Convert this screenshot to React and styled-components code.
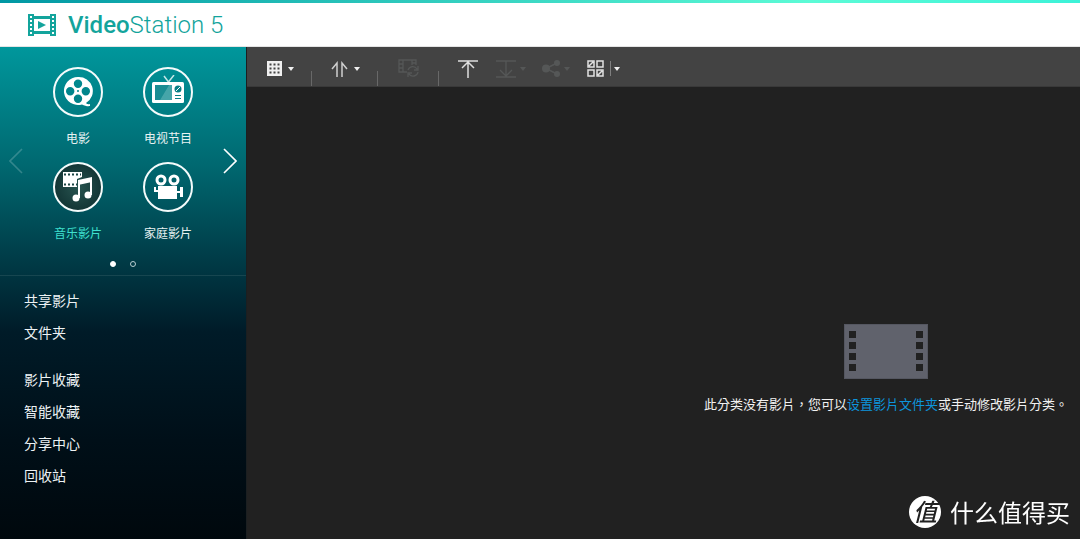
import styled, { createGlobalStyle } from 'styled-components';

const GlobalStyle = createGlobalStyle`
  * {
    box-sizing: border-box;
  }

  body {
    margin: 0;
    background: #212121;
    color: #ffffff;
    font-family: 'Noto Sans CJK SC', 'Noto Sans', sans-serif;
  }

  button {
    padding: 0;
    border: 0;
    background: none;
    color: inherit;
    font: inherit;
    cursor: pointer;
  }

  svg {
    display: block;
  }
`;

const Page = styled.div`
  display: flex;
  flex-direction: column;
  min-height: 100vh;
`;

const Header = styled.header`
  height: 47px;
  border-top: 3px solid;
  border-image: linear-gradient(90deg, #0097a3, #5cfbd6 75%, #3cf2d8) 1;
  border-width: 3px 0 0;
  background: #ffffff;
`;

const Brand = styled.h1`
  display: flex;
  align-items: center;
  gap: 12px;
  height: 44px;
  margin: 0;
  padding-left: 28px;
  border-bottom: 1px solid #e4e4e4;
  color: #13a49c;
  font: 300 24px/44px Roboto, sans-serif;

  strong {
    font-weight: 500;
  }
`;

const Body = styled.div`
  display: flex;
  flex: 1;
`;

const Sidebar = styled.aside`
  flex: none;
  width: 247px;
  border-right: 1px solid #1b1f21;
  background: linear-gradient(#00979c 0%, #006870 24%, #003541 46%, #001b28 58%, #000f18 80%, #00080d 100%);
`;

const Carousel = styled.div`
  display: flex;
  align-items: center;
  justify-content: space-between;
  height: 208px;
  padding: 20px 9px 0 9px;
`;

const Categories = styled.div`
  display: grid;
  grid-template-columns: 90px 90px;
  grid-auto-rows: 95px;
  height: 188px;
`;

const Category = styled.button`
  display: flex;
  flex-direction: column;
  align-items: center;
  gap: 12px;
  height: 80px;
  color: ${props => (props.$active ? '#3fe0cf' : '#e8f2f2')};
  font-size: 12px;
  line-height: 18px;
`;

const Circle = styled.span`
  display: flex;
  align-items: center;
  justify-content: center;
  width: 50px;
  height: 50px;
  border: 2px solid #f4fbfb;
  border-radius: 50%;
  background: ${props => (props.$active ? 'radial-gradient(#285450, #0b2a2b)' : 'none')};
`;

const Arrow = styled.button`
  opacity: ${props => (props.disabled ? 0.2 : 1)};
`;

const Pages = styled.div`
  display: flex;
  justify-content: center;
  gap: 14px;
  height: 21px;
  padding-top: 6px;
  border-bottom: 1px solid #174650;
`;

const Dot = styled.button`
  && {
    width: 6px;
    height: 6px;
    border: 1px solid ${props => (props.$active ? '#ffffff' : '#b9cdd1')};
    border-radius: 50%;
    background: ${props => (props.$active ? '#ffffff' : 'none')};
  }
`;

const Menu = styled.ul`
  margin: 0;
  padding: 8px 24px 0;
  list-style: none;

  & + & {
    padding-top: 15px;
  }
`;

const MenuItem = styled.li`
  height: 32px;
  font-size: 14px;
  line-height: 32px;

  a {
    color: #edf2f4;
    text-decoration: none;
  }
`;

const Main = styled.main`
  display: flex;
  flex: 1;
  flex-direction: column;
  min-width: 0;
`;

const Toolbar = styled.div`
  display: flex;
  height: 40px;
  padding-left: 20px;
  border-bottom: 1px solid #393939;
  background: #434343;
`;

const Tool = styled.button`
  display: flex;
  align-items: center;
  gap: 6px;
  height: 40px;
  padding-top: 3px;
  margin-right: ${props => props.$gap}px;
  color: #f0f0f0;

  &:disabled {
    gap: 4px;
    color: #555757;
  }
`;

const Separator = styled.span`
  align-self: flex-end;
  width: 1px;
  height: 15px;
  margin-right: ${props => props.$gap}px;
  background: #686868;
`;

const Divider = styled.span`
  width: 1px;
  height: 15px;
  margin-right: -3px;
  background: #808080;
`;

const Empty = styled.div`
  display: flex;
  flex-direction: column;
  align-items: center;
  align-self: flex-end;
  gap: 15px;
  padding: 237px 12px 0;
`;

const Message = styled.p`
  margin: 0;
  color: #f2f2f2;
  font: 13px/20px 'Noto Sans CJK TC', sans-serif;

  a {
    color: #0d95dc;
    text-decoration: none;
  }
`;

const Watermark = styled.div`
  position: fixed;
  right: 10px;
  bottom: 11px;
  display: flex;
  align-items: center;
  gap: 9px;
  font-size: 24px;
  line-height: 32px;
`;

const Badge = styled.span`
  width: 32px;
  height: 32px;
  border-radius: 50%;
  background: #ffffff;
  color: #212121;
  font-size: 24px;
  font-style: italic;
  font-weight: 500;
  line-height: 30px;
  text-align: center;
`;

const LogoIcon = () => (
  <svg width="28" height="22" viewBox="0 0 28 22" fill="#13a49c" aria-hidden="true">
    <path fillRule="evenodd" d="M0 0h6v2h16V0h6v22h-6v-2H6v2H0zM6 5v12h16V5z" />
    <path d="M10 7l8 4-8 4z" />
    {[2, 6, 10, 14, 18].map(y => (
      <g key={y} fill="#ffffff">
        <rect x="2" y={y} width="2" height="2" />
        <rect x="24" y={y} width="2" height="2" />
      </g>
    ))}
  </svg>
);

const ReelIcon = () => (
  <svg width="30" height="32" viewBox="0 0 30 32" fill="#ffffff">
    <path
      fillRule="evenodd"
      d="M15 1a14 14 0 1 0 4 27.4c3 1.6 6 2 8 1.6v-2c-2 .4-3 .2-4-1A14 14 0 0 0 15 1zM15 3.5a4.2 4.2 0 1 1 0 8.4 4.2 4.2 0 0 1 0-8.4zM7.2 11a4.2 4.2 0 1 1 0 8.4 4.2 4.2 0 0 1 0-8.4zM22.8 11a4.2 4.2 0 1 1 0 8.4 4.2 4.2 0 0 1 0-8.4zM15 18.5a4.2 4.2 0 1 1 0 8.4 4.2 4.2 0 0 1 0-8.4zM15 14a1 1 0 1 0 0 2 1 1 0 0 0 0-2z"
    />
  </svg>
);

const TvIcon = () => (
  <svg width="32" height="34" viewBox="0 0 32 34">
    <path d="M12 1l4.5 6L22 0" fill="none" stroke="#c5e6e7" strokeWidth="1.5" />
    <rect y="7" width="32" height="21" rx="1.5" fill="#ffffff" />
    <rect x="3" y="10" width="17" height="15" fill="#067f86" />
    <path d="M3 25V10h14L8 25z" fill="#1a8d93" />
    <path d="M17 10h3v15H8z" fill="#45a5a9" />
    <circle cx="26" cy="14" r="3.5" fill="#067f86" />
    <path d="M24 16l4-4" stroke="#ffffff" />
    <path d="M23 20.5h6M23 23.5h6" stroke="#067f86" />
  </svg>
);

const MusicIcon = () => (
  <svg width="32" height="32" viewBox="0 0 32 32">
    <path d="M1 1h19v5l-5 2v8H1z" fill="#ffffff" />
    <path d="M2 3.5h17M2 13.5h13" stroke="#1b4544" strokeWidth="2" strokeDasharray="2 2" />
    <path d="M16 9l14-3v5l-14 3z" fill="#ffffff" />
    <path d="M17 27V10M29 24V8" fill="none" stroke="#ffffff" strokeWidth="2" />
    <circle cx="14" cy="27" r="3.5" fill="#ffffff" />
    <circle cx="26" cy="24" r="3.5" fill="#ffffff" />
  </svg>
);

const CameraIcon = () => (
  <svg width="30" height="28" viewBox="0 0 30 28" fill="#ffffff">
    <circle cx="8" cy="7" r="4" fill="none" stroke="#ffffff" strokeWidth="3" />
    <circle cx="21" cy="7" r="4" fill="none" stroke="#ffffff" strokeWidth="3" />
    <path d="M5 13h19v5h3v-4h3v10h-3v-4h-3v6H5v-7H1v-5h2v3h2z" />
  </svg>
);

const ChevronIcon = ({ left }) => (
  <svg width="14" height="26" viewBox="0 0 14 26" fill="none" stroke="#ffffff" strokeWidth="1.6">
    <path d={left ? 'M13 1L1 13l12 12' : 'M1 1l12 12L1 25'} />
  </svg>
);

const Caret = () => (
  <svg width="6" height="4" viewBox="0 0 6 4" fill="currentColor">
    <path d="M0 0h6L3 4z" />
  </svg>
);

const GridIcon = () => (
  <svg width="15" height="15" viewBox="0 0 15 15" fill="currentColor">
    <rect width="15" height="15" />
    {[2, 6, 10].map(y => [2, 6, 10].map(x => (
      <rect key={`${x}-${y}`} x={x + 0.5} y={y + 0.5} width="2" height="2" fill="#434343" />
    )))}
  </svg>
);

const SortIcon = () => (
  <svg width="17" height="16" viewBox="0 0 17 16" fill="none" stroke="#cfcfcf" strokeWidth="1.5">
    <path d="M1 8l5-6v14M16 8l-5-6v14" />
  </svg>
);

const ConvertIcon = () => (
  <svg width="21" height="19" viewBox="0 0 21 19" fill="none" stroke="currentColor" strokeWidth="1.3">
    <path d="M9 13H1V1h17v5M5 1v12M14 1v5M1 5h4M1 9h4M14 4h4" />
    <path d="M10 11a5 5 0 0 1 9-1m1-3v4h-4M20 13a5 5 0 0 1-9 2m-1 3v-4h4" />
  </svg>
);

const UploadIcon = () => (
  <svg width="20" height="18" viewBox="0 0 20 18" fill="none" stroke="#dedede" strokeWidth="1.5">
    <path d="M0 1h20M10 18V2M4 8l6-6 6 6" />
  </svg>
);

const DownloadIcon = () => (
  <svg width="20" height="18" viewBox="0 0 20 18" fill="none" stroke="currentColor" strokeWidth="1.3">
    <path d="M0 1h20M0 17h20M10 1v15M4 10l6 6 6-6" />
  </svg>
);

const ShareIcon = () => (
  <svg width="18" height="17" viewBox="0 0 18 17" fill="currentColor">
    <path d="M15 3L4 8.5 15 14" fill="none" stroke="currentColor" strokeWidth="1.5" />
    <circle cx="4" cy="8.5" r="4" />
    <circle cx="15" cy="3" r="3" />
    <circle cx="15" cy="14" r="3" />
  </svg>
);

const SelectIcon = () => (
  <svg width="17" height="17" viewBox="0 0 17 17" fill="none" stroke="#e2e2e2" strokeWidth="1.5">
    <path d="M1 1h6v6H1zM10 1h6v6h-6zM1 10h6v6H1zM10 10h6v6h-6zM2 6l4-4M11 15l4-4" />
  </svg>
);

const FilmIcon = () => (
  <svg width="84" height="55" viewBox="0 0 84 55" aria-hidden="true">
    <rect x="0.5" y="0.5" width="83" height="54" fill="#60626c" stroke="#555761" />
    {[7, 18, 29, 40].map(y => (
      <g key={y} fill="#212121">
        <rect x="5" y={y} width="7" height="7" />
        <rect x="72" y={y} width="7" height="7" />
      </g>
    ))}
  </svg>
);

const categories = [
  { label: '电影', icon: <ReelIcon /> },
  { label: '电视节目', icon: <TvIcon /> },
  { label: '音乐影片', icon: <MusicIcon />, active: true },
  { label: '家庭影片', icon: <CameraIcon /> },
];

const menus = [
  ['共享影片', '文件夹'],
  ['影片收藏', '智能收藏', '分享中心', '回收站'],
];

const App = () => (
  <Page>
    <GlobalStyle />
    <Header>
      <Brand>
        <LogoIcon />
        <span><strong>Video</strong>Station 5</span>
      </Brand>
    </Header>

    <Body>
      <Sidebar>
        <Carousel>
          <Arrow disabled aria-label="上一页"><ChevronIcon left /></Arrow>
          <Categories>
            {categories.map(({ label, icon, active }) => (
              <Category key={label} $active={active}>
                <Circle $active={active}>{icon}</Circle>
                {label}
              </Category>
            ))}
          </Categories>
          <Arrow aria-label="下一页"><ChevronIcon /></Arrow>
        </Carousel>
        <Pages>
          <Dot $active aria-label="1" />
          <Dot aria-label="2" />
        </Pages>

        <nav>
          {menus.map(items => (
            <Menu key={items[0]}>
              {items.map(item => (
                <MenuItem key={item}><a href="#">{item}</a></MenuItem>
              ))}
            </Menu>
          ))}
        </nav>
      </Sidebar>

      <Main>
        <Toolbar>
          <Tool $gap={17} aria-label="视图"><GridIcon /><Caret /></Tool>
          <Separator $gap={19} />
          <Tool $gap={17} aria-label="排序"><SortIcon /><Caret /></Tool>
          <Separator $gap={20} />
          <Tool $gap={19} disabled aria-label="转码"><ConvertIcon /></Tool>
          <Separator $gap={19} />
          <Tool $gap={18} aria-label="上传"><UploadIcon /></Tool>
          <Tool $gap={16} disabled aria-label="下载"><DownloadIcon /><Caret /></Tool>
          <Tool $gap={17} disabled aria-label="分享"><ShareIcon /><Caret /></Tool>
          <Tool $gap={0} aria-label="多选"><SelectIcon /><Divider /><Caret /></Tool>
        </Toolbar>

        <Empty>
          <FilmIcon />
          <Message>
            此分类没有影片，您可以<a href="#">设置影片文件夹</a>或手动修改影片分类。
          </Message>
        </Empty>
      </Main>
    </Body>

    <Watermark>
      <Badge>值</Badge>
      什么值得买
    </Watermark>
  </Page>
);

export default App;
